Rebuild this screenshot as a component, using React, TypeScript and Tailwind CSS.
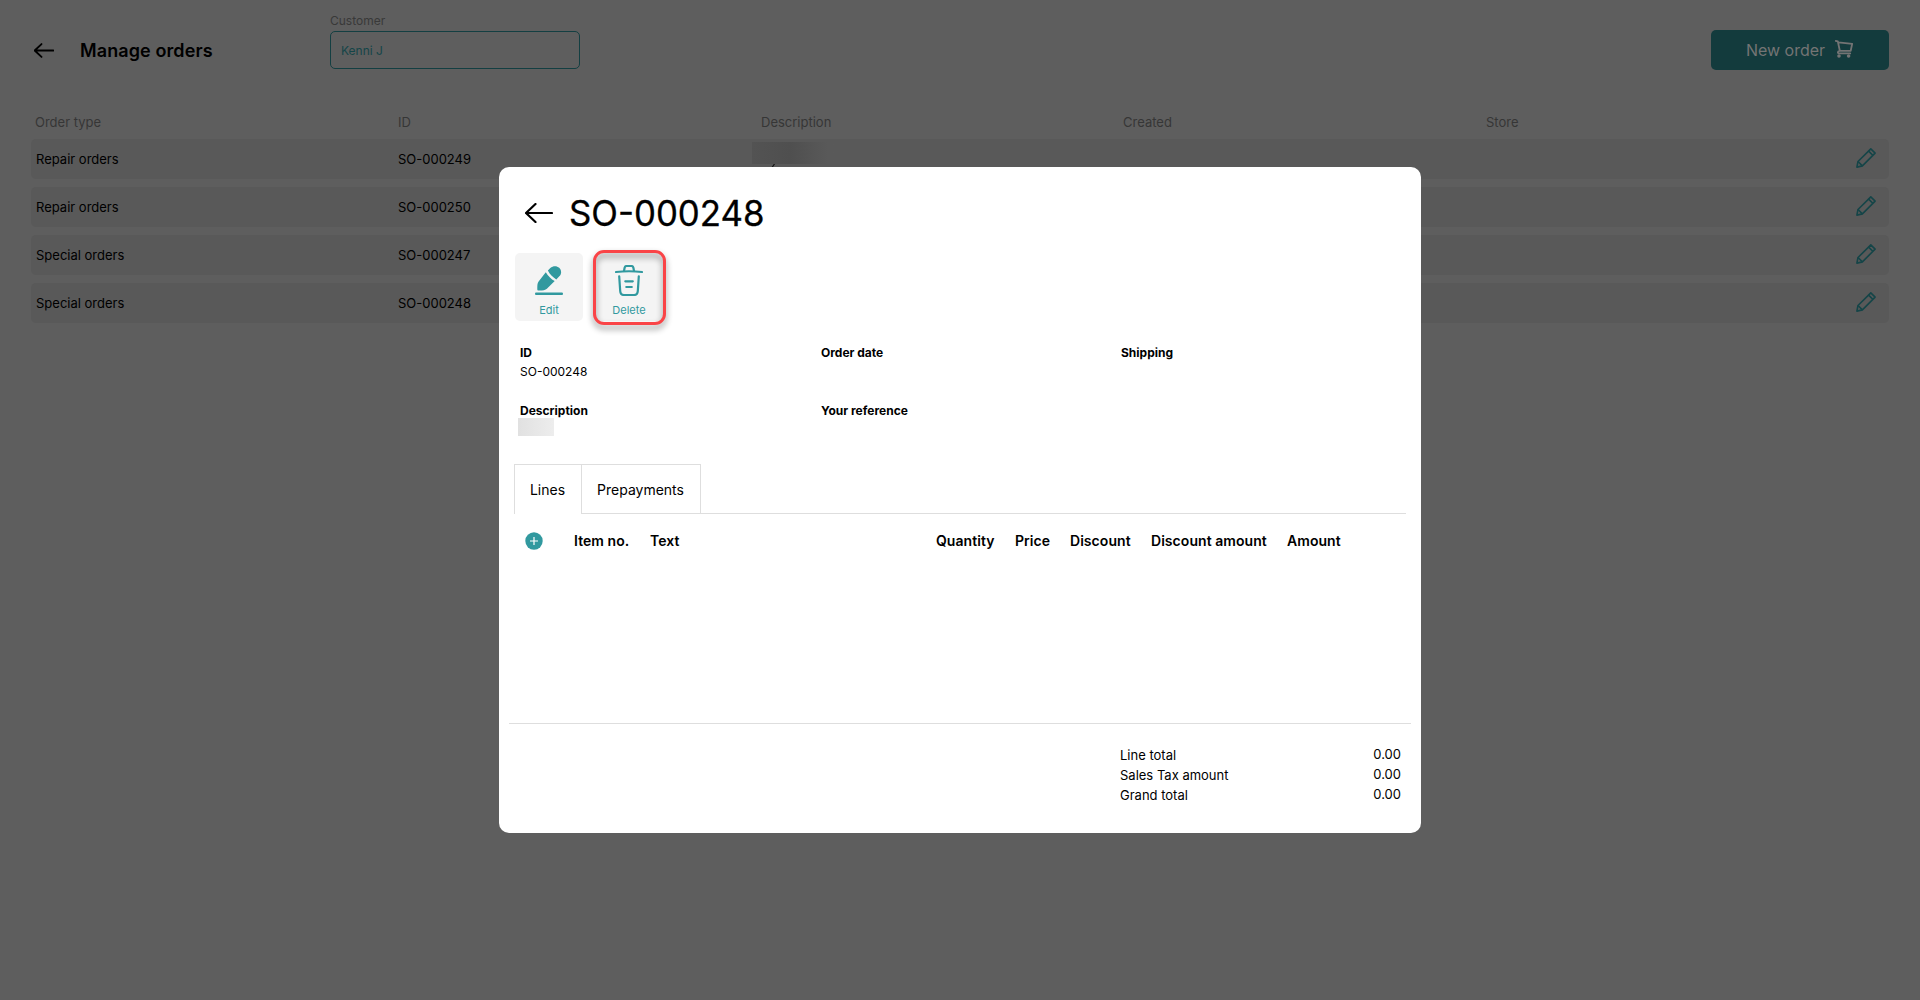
import type { ReactNode } from 'react';

const orders = [
  { type: 'Repair orders', id: 'SO-000249' },
  { type: 'Repair orders', id: 'SO-000250' },
  { type: 'Special orders', id: 'SO-000247' },
  { type: 'Special orders', id: 'SO-000248' },
];

const totals = [
  { label: 'Line total', value: '0.00' },
  { label: 'Sales Tax amount', value: '0.00' },
  { label: 'Grand total', value: '0.00' },
];

const BackArrow = ({ className }: { className: string }) => (
  <svg viewBox="0 0 28 20" className={className} fill="none" stroke="currentColor" strokeLinecap="round" strokeLinejoin="round">
    <path d="M27 10H1M10.5 1L1 10l9.5 9" />
  </svg>
);

const CartIcon = () => (
  <svg viewBox="0 0 18 18" className="-mt-[3px] size-[18px]" fill="none" stroke="currentColor" strokeWidth="1.8" strokeLinejoin="round" strokeLinecap="round">
    <path d="M0.8 0.9l2 .4 2 9.5M3.4 2.3l13.8 1.5-1.5 7H4.8c-2.600.2-2.600 2.600 0 2.600h10.400" />
    <circle cx="4" cy="16" r="0.9" fill="currentColor" />
    <circle cx="13.600" cy="16" r="0.9" fill="currentColor" />
  </svg>
);

const PencilIcon = () => (
  <svg viewBox="0 0 20 20" className="size-5" fill="none" stroke="currentColor" strokeWidth="1.6" strokeLinejoin="round">
    <path d="M0.9 19.1l1.1-5.6L14.8 0.9l4.3 4.2L6.4 17.9z" />
    <path d="M2 13.5l4.4 4.4M12.6 3.1l4.2 4.2" />
  </svg>
);

const EditIcon = () => (
  <svg viewBox="0 0 28 29" className="h-[29px] w-7" fill="currentColor">
    <path d="M10.8 6.2c2.3 3.7 5.3 6.8 8.9 8.900l-7.800 7.600c-1.400 1.400-4.800 1.900-8.300 1.800-.9 0-1.300-.4-1.300-1.300 0-3.100-.1-6.100 1.300-7.800z" />
    <path d="M12.9 4.6l2.400-2.500c2.700-2.500 6.500-2.500 8.900-.3 2.500 2.500 2.600 6 .1 8.400l-3 3.200c-3.600-2-6.600-5.100-8.400-8.800z" />
    <rect x="0" y="26.6" width="28" height="2.4" rx="1.1" />
  </svg>
);

const TrashIcon = () => (
  <svg viewBox="0 0 28 31" className="h-[31px] w-7" fill="none" stroke="currentColor" strokeWidth="2.2" strokeLinecap="round" strokeLinejoin="round">
    <path d="M1 7c8.5-1 17.500-1 26 0" />
    <path d="M9 6l.6-3.2c.3-1.2.8-1.8 2-1.800h4.800c1.200 0 1.700.6 2 1.800L19 6" />
    <path d="M4.2 11.300l1 14.700c.2 2.700 1.200 4 3.800 4h10c2.600 0 3.600-1.300 3.800-4l1-14.700" />
    <path d="M10.3 16.300h7.500M11.300 22h5.500" />
  </svg>
);

const Field = ({ label, children }: { label: string; children?: ReactNode }) => (
  <div className="h-[58px]">
    <p className="text-xs leading-[18px] font-bold">{label}</p>
    {children}
  </div>
);

const OrdersPage = () => (
  <div className="h-[1000px] bg-[#5e5e5e]">
    <header className="flex h-[115px] items-start pr-[31px] pl-[34px]">
      <BackArrow className="mt-[43px] h-[15px] w-5 stroke-[2.6] text-black" />
      <h1 className="mt-[37px] ml-[26px] w-[250px] text-lg leading-7 font-semibold tracking-[0.1px]">Manage orders</h1>
      <div className="pt-3">
        <label className="block h-[19px] text-xs leading-[18px] text-[#393939]">Customer</label>
        <div className="flex h-[38px] w-[250px] items-center rounded-[5px] border border-[#133f42] pt-0.5 pl-2.5 text-xs text-[#154548]">
          Kenni J
        </div>
      </div>
      <button className="mt-[30px] ml-auto flex h-10 w-[178px] items-center justify-center gap-2.5 rounded-[5px] bg-[#133b3d] pr-px text-base text-[#747474]">
        New order
        <CartIcon />
      </button>
    </header>

    <main className="px-[31px] text-[13px]">
      <div className="-mt-px grid h-[25px] grid-cols-[363px_363px_362px_363px_1fr] pl-1 leading-4 text-[#363636]">
        <span>Order type</span>
        <span>ID</span>
        <span>Description</span>
        <span>Created</span>
        <span>Store</span>
      </div>
      <div className="flex flex-col gap-2">
        {orders.map((order, i) => (
          <div key={order.id} className="grid h-10 grid-cols-[362px_363px_1fr_45px] items-center rounded-[5px] bg-[#595959] pl-[5px]">
            <span className="pt-0.5">{order.type}</span>
            <span className="pt-0.5">{order.id}</span>
            <span className="self-start">
              {i === 0 && (
                <>
                  <span className="mt-[3px] -ml-[9px] block h-[22px] w-[84px] bg-linear-to-r from-[#535353] via-[#4f4f4f] via-45% to-[#595959] to-90%" />
                  <svg viewBox="0 0 5 4" className="ml-2.5 h-1 w-[5px]" stroke="#111" strokeWidth="1.2">
                    <path d="M1 3.5L3.500 0" />
                  </svg>
                </>
              )}
            </span>
            <span className="-mt-0.5 pl-3 text-[#154548]">
              <PencilIcon />
            </span>
          </div>
        ))}
      </div>
    </main>
  </div>
);

const OrderDialog = () => (
  <div className="flex h-[666px] w-[922px] flex-col rounded-[10px] bg-white px-2.5">
    <div className="flex h-[86px] items-center pt-[5px] pl-4">
      <BackArrow className="h-5 w-7 stroke-[2.2]" />
      <h2 className="ml-4 pt-px text-[34.8px] leading-[44px] [-webkit-text-stroke:0.3px_black]">SO-000248</h2>
    </div>

    <div className="flex h-[85px] gap-3 pl-1.5 text-[11px] text-[#31999f]">
      <button className="flex size-[68px] flex-col items-center rounded-[5px] bg-[#f4f4f4] pt-[13px]">
        <EditIcon />
        <span className="mt-[7px] leading-4">Edit</span>
      </button>
      <button className="relative flex size-[68px] flex-col items-center rounded-[5px] bg-[#f4f4f4] pt-3">
        <TrashIcon />
        <span className="mt-1.5 leading-4">Delete</span>
        <span className="absolute -top-[3px] -left-[2px] h-[75px] w-[73px] rounded-[11px] border-3 border-[#fa4447] drop-shadow-[0_4px_3px_rgba(0,0,0,0.45)]" />
      </button>
    </div>

    <div className="grid h-[126px] grid-cols-[301px_300px_1fr] content-start pt-[6px] pl-[11px]">
      <Field label="ID">
        <p className="text-xs leading-5">SO-000248</p>
      </Field>
      <Field label="Order date" />
      <Field label="Shipping" />
      <Field label="Description">
        <div className="-mt-0.5 -ml-0.5 h-[18px] w-9 bg-linear-to-r from-[#e1e1e1] to-[#ededed]" />
      </Field>
      <Field label="Your reference" />
    </div>

    <div className="mr-[5px] ml-[5px] flex h-[50px] text-sm">
      <div className="flex w-[67px] items-center justify-center border-t border-l border-[#dedede] pt-px pr-px">Lines</div>
      <div className="flex w-[120px] items-center justify-center border border-[#dedede] pt-0.5 pr-px">Prepayments</div>
      <div className="flex-1 border-b border-[#dedede]" />
    </div>

    <div className="flex h-[209px] items-start pt-[17px] pl-4 text-sm font-semibold tracking-[0.05px]">
      <svg viewBox="0 0 18 18" className="mt-px size-[18px]" fill="none">
        <circle cx="9" cy="9" r="8.7" fill="#31999f" />
        <path d="M9 5v8M5 9h8" stroke="#fff" strokeWidth="1.2" />
      </svg>
      <span className="ml-[31px] w-[76px]">Item no.</span>
      <span className="w-[286px]">Text</span>
      <span className="w-[79px]">Quantity</span>
      <span className="w-[55px]">Price</span>
      <span className="w-[81px]">Discount</span>
      <span className="w-[136px]">Discount amount</span>
      <span>Amount</span>
    </div>

    <div className="flex justify-end border-t border-[#dedede] pt-[21px] pr-2.5 text-[13px]">
      <div className="w-[281px]">
        {totals.map((total) => (
          <div key={total.label} className="flex h-5 justify-between leading-5">
            <span>{total.label}</span>
            <span className="-mt-px">{total.value}</span>
          </div>
        ))}
      </div>
    </div>
  </div>
);

const App = () => {
  return (
    <div className="relative font-['Inter',sans-serif] text-black">
      <OrdersPage />
      <div className="absolute inset-0 flex items-center justify-center">
        <OrderDialog />
      </div>
    </div>
  );
};

export default App;
